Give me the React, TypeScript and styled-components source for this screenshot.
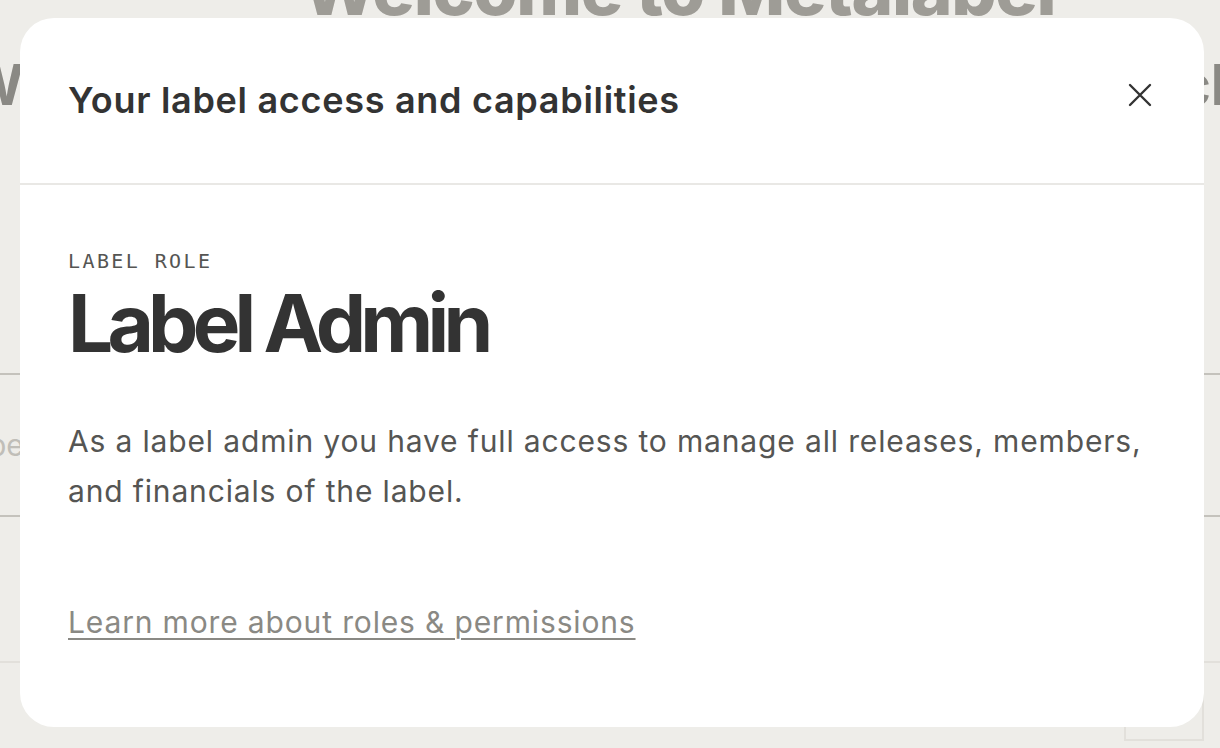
import React from "react";
import styled, { createGlobalStyle } from "styled-components";

const Global = createGlobalStyle`
  html, body { margin: 0; padding: 0; background: #eeede9; overflow: hidden; }
  body { font-family: Inter, "Noto Sans", sans-serif; }
  * { box-sizing: border-box; }
`;

const Page = styled.div`
  width: 1220px;
  height: 748px;
  overflow: hidden;
  position: relative;
  background: #eeede9;
`;

const Hero = styled.h1`
  margin: -46px 0 0 302px;
  font-family: Inter, sans-serif;
  font-weight: 800;
  font-size: 71px;
  letter-spacing: -1.3px;
  line-height: 70px;
  color: #9e9c96;
  white-space: nowrap;
`;

const SubHero = styled.div`
  margin: 31px 0 0 -34px;
  font-family: Inter, sans-serif;
  font-weight: 700;
  font-size: 56px;
  line-height: 60px;
  color: #8a8984;
  white-space: nowrap;
  display: flex;
  justify-content: space-between;
  width: 1260px;
`;

const Rows = styled.div`
  margin-top: 258px;
  display: flex;
  flex-direction: column;
`;

const Row = styled.div<{ $h: number; $line: string }>`
  height: ${(p) => p.$h}px;
  border-top: 2px solid ${(p) => p.$line};
  display: flex;
  align-items: center;
  font-size: 30px;
  color: #c0beb8;
  margin-left: -12px;
`;

const Card = styled.div`
  margin-left: 1136px;
  align-self: flex-start;
  width: 80px;
  height: 78px;
  border: 2px solid #e2e0db;
  border-top: none;
`;

const Overlay = styled.div`
  position: absolute;
  inset: 0;
  display: flex;
  padding: 18px 16px 21px 20px;
`;

const Modal = styled.div`
  flex: 1;
  background: #ffffff;
  border-radius: 34px;
  display: flex;
  flex-direction: column;
  overflow: hidden;
`;

const Header = styled.div`
  height: 167px;
  border-bottom: 2px solid #e9e8e5;
  display: flex;
  align-items: center;
  justify-content: space-between;
  padding: 0 52px 2px 48px;
`;

const Title = styled.h2`
  margin: 0;
  font-family: Inter, sans-serif;
  font-weight: 600;
  font-size: 36px;
  color: #333333;
  letter-spacing: 0.7px;
`;

const CloseButton = styled.button`
  border: none;
  background: none;
  padding: 0;
  width: 24px;
  height: 24px;
  margin-top: -10px;
  display: flex;
  align-items: center;
  justify-content: center;
  cursor: pointer;
`;

const Body = styled.div`
  padding: 62px 48px 0 48px;
  display: flex;
  flex-direction: column;
`;

const Eyebrow = styled.div`
  font-family: "DejaVu Sans Mono", "Liberation Mono", monospace;
  font-size: 20px;
  letter-spacing: 2.4px;
  line-height: 28px;
  color: #555553;
`;

const RoleName = styled.div`
  font-family: Inter, sans-serif;
  font-weight: 700;
  font-size: 80px;
  line-height: 84px;
  letter-spacing: -5.8px;
  color: #333333;
  margin-top: 6px;
`;

const Description = styled.p`
  margin: 51px 0 0 0;
  font-family: Inter, sans-serif;
  font-size: 30px;
  line-height: 50px;
  letter-spacing: 0.85px;
  color: #555553;
`;

const LearnLink = styled.a`
  margin-top: 86px;
  font-family: Inter, sans-serif;
  font-size: 30px;
  line-height: 40px;
  letter-spacing: 0.85px;
  color: #8a8984;
  text-decoration: underline;
  text-underline-offset: 5px;
  text-decoration-thickness: 2px;
  align-self: flex-start;
`;

export default function App() {
  return (
    <>
      <Global />
      <Page>
        <Hero>Welcome to Metalabel</Hero>
        <SubHero>
          <span>W</span>
          <span>cl</span>
        </SubHero>
        <Rows>
          <Row $h={142} $line="#c4c2bc">be</Row>
          <Row $h={146} $line="#c4c2bc" />
          <Row $h={80} $line="#e2e0db">
            <Card />
          </Row>
        </Rows>
        <Overlay>
          <Modal role="dialog">
            <Header>
              <Title>Your label access and capabilities</Title>
              <CloseButton aria-label="Close">
                <svg width="24" height="24" viewBox="0 0 24 24" fill="none">
                  <path d="M2 2 L22 22 M22 2 L2 22" stroke="#333" strokeWidth="2.4" strokeLinecap="round" />
                </svg>
              </CloseButton>
            </Header>
            <Body>
              <Eyebrow>LABEL ROLE</Eyebrow>
              <RoleName>Label Admin</RoleName>
              <Description>
                As a label admin you have full access to manage all releases, members,
                <br />
                and financials of the label.
              </Description>
              <LearnLink href="#">Learn more about roles &amp; permissions</LearnLink>
            </Body>
          </Modal>
        </Overlay>
      </Page>
    </>
  );
}
